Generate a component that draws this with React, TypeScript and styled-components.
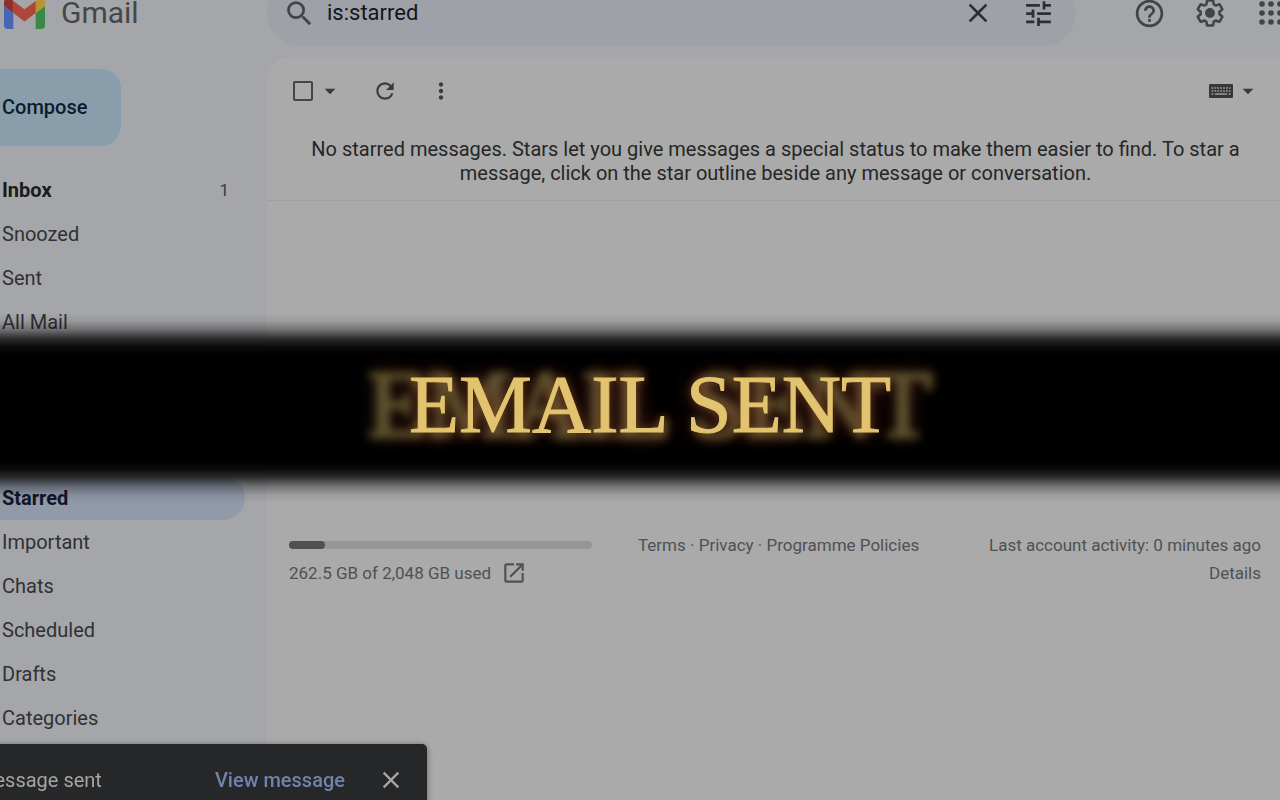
import React from "react";
import styled, { createGlobalStyle } from "styled-components";
import {
  MdArrowDropDown,
  MdClose,
  MdHelpOutline,
  MdMoreVert,
  MdOpenInNew,
  MdRefresh,
  MdSearch,
  MdTune,
} from "react-icons/md";

const GlobalStyle = createGlobalStyle`
  *, *::before, *::after { box-sizing: border-box; }
  body {
    margin: 0;
    background: #a5a6a9;
    color: #2b2c2e;
    font-family: Roboto, "Liberation Sans", sans-serif;
    overflow: hidden;
  }
`;

const Page = styled.div`
  display: flex;
  flex-direction: column;
  min-height: 100vh;
  overflow: hidden;
`;

const Header = styled.header`
  display: flex;
  align-items: center;
  height: 66px;
  margin-top: -20px;
  color: #414345;
`;

const Brand = styled.a`
  display: flex;
  align-items: center;
  gap: 16px;
  flex: 0 0 267px;
  padding-left: 4px;
  color: #454648;
  font: 400 30px/32px Roboto, sans-serif;
  text-decoration: none;
`;

const SearchBar = styled.form`
  display: flex;
  align-items: center;
  flex: 1;
  min-width: 0;
  height: 66px;
  padding: 0 22px 0 16px;
  border-radius: 33px;
  background: #9ea2a8;
`;

const SearchInput = styled.input`
  flex: 1;
  min-width: 0;
  margin-left: 12px;
  padding: 0;
  border: 0;
  outline: 0;
  background: transparent;
  color: #151618;
  font: 400 22px/28px Roboto, sans-serif;
`;

const IconButton = styled.button<{ $size?: number }>`
  display: flex;
  align-items: center;
  justify-content: center;
  flex: none;
  width: ${(p) => p.$size ?? 32}px;
  height: ${(p) => p.$size ?? 32}px;
  padding: 0;
  border: 0;
  background: transparent;
  color: inherit;

  & > svg { flex: none; }
`;

const SearchActions = styled.div`
  display: flex;
  gap: 28px;
  color: #2d2f33;
`;

const HeaderActions = styled.div`
  display: flex;
  gap: 29px;
  flex: 0 0 204px;
  padding-left: 57px;
  overflow: hidden;
`;

const Body = styled.div`
  display: flex;
  flex: 1;
`;

const Sidebar = styled.aside`
  flex: 0 0 267px;
  padding: 23px 22px 0 0;
`;

const Compose = styled.button`
  display: block;
  width: 121px;
  height: 77px;
  margin-bottom: 22px;
  padding: 0 0 2px 2px;
  border: 0;
  border-radius: 0 20px 20px 0;
  background: #8a9dab;
  color: #0b1c2d;
  font: 500 20px/24px Roboto, sans-serif;
  text-align: left;
`;

const Nav = styled.nav`
  display: flex;
  flex-direction: column;
  gap: 132px;
`;

const FolderList = styled.ul`
  margin: 0;
  padding: 0;
  list-style: none;
`;

const FolderLink = styled.a<{ $bold?: boolean; $active?: boolean }>`
  display: flex;
  align-items: center;
  justify-content: space-between;
  height: 44px;
  padding: 0 16px 0 2px;
  border-radius: 0 22px 22px 0;
  background: ${(p) => (p.$active ? "#9299a9" : "transparent")};
  color: ${(p) => (p.$active ? "#101827" : p.$bold ? "#1b1c1e" : "#303133")};
  font-size: 20px;
  line-height: 24px;
  font-weight: ${(p) => (p.$bold || p.$active ? 700 : 400)};
  text-decoration: none;
`;

const Count = styled.span`
  font-size: 17px;
  font-weight: 400;
  color: #3a3b3d;
`;

const Panel = styled.main`
  flex: 1;
  min-width: 0;
  margin-top: 11px;
  border-radius: 24px 0 0 0;
  background: #aaaaaa;
`;

const Toolbar = styled.div`
  display: flex;
  align-items: center;
  height: 68px;
  padding: 0 19px 0 26px;
  color: #3a3b3c;
`;

const Checkbox = styled.input`
  appearance: none;
  width: 20px;
  height: 20px;
  margin: 0 5px 0 0;
  border: 2px solid #444546;
  border-radius: 2px;
`;

const ToolGroup = styled.div`
  display: flex;
  align-items: center;
  gap: 30px;
  flex: 1;
  margin-left: 30px;
`;

const KeyboardButton = styled(IconButton)`
  width: auto;
  gap: 2px;
`;

const EmptyMessage = styled.p`
  margin: 0;
  padding: 12px 36px 15px 40px;
  border-bottom: 1px solid #9fa0a1;
  color: #252627;
  font-size: 20px;
  line-height: 24px;
  text-align: center;
`;

const Footer = styled.footer`
  display: grid;
  grid-template-columns: 303px 1fr auto;
  column-gap: 46px;
  padding: 330px 19px 0 22px;
  color: #505152;
  font-size: 17px;
  line-height: 28px;
`;

const Meter = styled.div`
  display: flex;
  align-items: center;
  height: 28px;
`;

const MeterTrack = styled.div`
  width: 100%;
  height: 8px;
  border-radius: 4px;
  background: #969697;
`;

const MeterFill = styled.div`
  height: 8px;
  border-radius: 4px;
  background: #4f5050;
`;

const StorageLink = styled.a`
  display: flex;
  align-items: center;
  gap: 10px;
  color: inherit;
  text-decoration: none;
  white-space: nowrap;
`;

const Activity = styled.div`
  text-align: right;
`;

const PlainLink = styled.a`
  color: inherit;
  text-decoration: none;
`;

const Toast = styled.div`
  position: fixed;
  left: -48px;
  bottom: -16px;
  display: flex;
  align-items: center;
  width: 475px;
  height: 72px;
  padding: 0 20px 0 25px;
  border-radius: 5px;
  background: #262729;
  box-shadow: 0 1px 6px rgba(0, 0, 0, 0.4);
  color: #a6a6a6;
  font-size: 20px;
  line-height: 24px;
`;

const ToastText = styled.span`
  flex: 1;
`;

const ToastLink = styled.a`
  margin-right: 30px;
  color: #7083ad;
  font-weight: 500;
  text-decoration: none;
`;

const Banner = styled.div`
  position: fixed;
  inset: 51% 0 auto;
  display: flex;
  align-items: center;
  justify-content: center;
  height: 190px;
  padding: 0 0 6px 20px;
  transform: translateY(-50%);
  pointer-events: none;
  background: linear-gradient(
    to bottom,
    transparent 0,
    rgba(0, 0, 0, 0.08) 8px,
    rgba(0, 0, 0, 0.34) 17px,
    rgba(0, 0, 0, 0.74) 26px,
    rgba(0, 0, 0, 0.94) 34px,
    #000 42px,
    #000 calc(100% - 42px),
    rgba(0, 0, 0, 0.94) calc(100% - 34px),
    rgba(0, 0, 0, 0.74) calc(100% - 26px),
    rgba(0, 0, 0, 0.34) calc(100% - 17px),
    rgba(0, 0, 0, 0.08) calc(100% - 8px),
    transparent 100%
  );
`;

const Title = styled.strong`
  position: relative;
  color: #e2c36f;
  font: 400 82px/96px "Liberation Serif", serif;
  white-space: nowrap;
  -webkit-text-stroke: 1px #e2c36f;
  text-shadow: 0 0 8px rgba(130, 85, 30, 0.6), 0 0 20px rgba(110, 50, 40, 0.8);

  &::before {
    content: attr(data-label);
    position: absolute;
    inset: 0 -80px;
    z-index: -1;
    color: #75683a;
    font-size: 96px;
    text-align: center;
    filter: blur(4px);
    opacity: 0.8;
    -webkit-text-stroke: 3px #75683a;
  }
`;

const inboxFolders = ["Inbox", "Snoozed", "Sent", "All Mail"];
const otherFolders = ["Starred", "Important", "Chats", "Scheduled", "Drafts", "Categories"];

const GmailLogo = () => (
  <svg width="41" height="31" viewBox="52 42 88 66" aria-hidden="true">
    <path fill="#4866b4" d="M58 108h14V74L52 59v43c0 3.32 2.69 6 6 6" />
    <path fill="#3b8848" d="M120 108h14c3.32 0 6-2.69 6-6V59l-20 15" />
    <path fill="#b99532" d="M120 48v26l20-15v-8c0-7.42-8.47-11.65-14.4-7.2" />
    <path fill="#b0453c" d="M72 74V48l24 18 24-18v26L96 92" />
    <path fill="#8d302c" d="M52 51v8l20 15V48l-5.6-4.2c-5.94-4.45-14.4-.22-14.4 7.2" />
  </svg>
);

const GearIcon = () => (
  <svg width="30" height="30" viewBox="1 1 22 22" aria-hidden="true">
    <path
      fill="none"
      stroke="currentColor"
      strokeWidth="2"
      strokeLinejoin="round"
      transform="translate(1 1) scale(.92)"
      d="M19.43 12.98c.04-.32.07-.64.07-.98 0-.34-.03-.66-.07-.98l2.11-1.65c.19-.15.24-.42.12-.64l-2-3.46c-.09-.16-.26-.25-.44-.25-.06 0-.12.01-.17.03l-2.49 1c-.52-.4-1.08-.73-1.69-.98l-.38-2.65C14.46 2.18 14.25 2 14 2h-4c-.25 0-.46.18-.49.42l-.38 2.65c-.61.25-1.17.59-1.69.98l-2.49-1c-.06-.02-.12-.03-.18-.03-.17 0-.34.09-.43.25l-2 3.46c-.13.22-.07.49.12.64l2.11 1.65c-.04.32-.07.65-.07.98 0 .33.03.66.07.98l-2.11 1.65c-.19.15-.24.42-.12.64l2 3.46c.09.16.26.25.44.25.06 0 .12-.01.17-.03l2.49-1c.52.4 1.08.73 1.69.98l.38 2.65c.03.24.24.42.49.42h4c.25 0 .46-.18.49-.42l.38-2.65c.61-.25 1.17-.59 1.69-.98l2.49 1c.06.02.12.03.18.03.17 0 .34-.09.43-.25l2-3.46c.12-.22.07-.49-.12-.64l-2.11-1.65z"
    />
    <circle cx="12" cy="12" r="3.6" fill="currentColor" />
  </svg>
);

const AppsIcon = () => (
  <svg width="24" height="24" viewBox="0 0 24 24" fill="currentColor" aria-hidden="true">
    {[3, 12, 21].map((y) =>
      [3, 12, 21].map((x) => <circle key={`${x}-${y}`} cx={x} cy={y} r="2.8" />)
    )}
  </svg>
);

const KeyboardIcon = () => (
  <svg width="24" height="14" viewBox="0 0 24 14" aria-hidden="true">
    <rect width="24" height="14" rx="1" fill="#363738" />
    <g stroke="#9a9a9a" strokeWidth="1.4">
      <path d="M2.5 4h19M2.5 7h19" strokeDasharray="1.8 1.1" />
      <path d="M2.5 10h2M6 10h12M19.5 10h2" />
    </g>
  </svg>
);

export default function App() {
  return (
    <>
      <GlobalStyle />
      <Page>
        <Header>
          <Brand href="#home">
            <GmailLogo />
            Gmail
          </Brand>
          <SearchBar role="search">
            <IconButton type="submit" aria-label="Search">
              <MdSearch size={33} />
            </IconButton>
            <SearchInput type="text" aria-label="Search mail" defaultValue="is:starred" />
            <SearchActions>
              <IconButton type="button" aria-label="Clear search">
                <MdClose size={32} />
              </IconButton>
              <IconButton type="button" aria-label="Search options">
                <MdTune size={33} />
              </IconButton>
            </SearchActions>
          </SearchBar>
          <HeaderActions>
            <IconButton aria-label="Support">
              <MdHelpOutline size={33} />
            </IconButton>
            <IconButton aria-label="Settings">
              <GearIcon />
            </IconButton>
            <IconButton aria-label="Google apps">
              <AppsIcon />
            </IconButton>
          </HeaderActions>
        </Header>

        <Body>
          <Sidebar>
            <Compose>Compose</Compose>
            <Nav aria-label="Folders">
              <FolderList>
                {inboxFolders.map((name) => (
                  <li key={name}>
                    <FolderLink href="#folder" $bold={name === "Inbox"}>
                      {name}
                      {name === "Inbox" && <Count>1</Count>}
                    </FolderLink>
                  </li>
                ))}
              </FolderList>
              <FolderList>
                {otherFolders.map((name) => (
                  <li key={name}>
                    <FolderLink href="#folder" $active={name === "Starred"}>
                      {name}
                    </FolderLink>
                  </li>
                ))}
              </FolderList>
            </Nav>
          </Sidebar>

          <Panel>
            <Toolbar>
              <Checkbox type="checkbox" aria-label="Select all" />
              <IconButton $size={24} aria-label="Select options">
                <MdArrowDropDown size={26} />
              </IconButton>
              <ToolGroup>
                <IconButton $size={26} aria-label="Refresh">
                  <MdRefresh size={26} />
                </IconButton>
                <IconButton $size={26} aria-label="More">
                  <MdMoreVert size={26} />
                </IconButton>
              </ToolGroup>
              <KeyboardButton aria-label="Input tools">
                <KeyboardIcon />
                <MdArrowDropDown size={26} />
              </KeyboardButton>
            </Toolbar>
            <EmptyMessage>
              No starred messages. Stars let you give messages a special status to make them easier
              to find. To star a message, click on the star outline beside any message or
              conversation.
            </EmptyMessage>
            <Footer>
              <div>
                <Meter>
                  <MeterTrack>
                    <MeterFill style={{ width: "12%" }} />
                  </MeterTrack>
                </Meter>
                <StorageLink href="#storage">
                  262.5 GB of 2,048 GB used
                  <MdOpenInNew size={26} />
                </StorageLink>
              </div>
              <div>
                <PlainLink href="#terms">Terms</PlainLink> ·{" "}
                <PlainLink href="#privacy">Privacy</PlainLink> ·{" "}
                <PlainLink href="#policies">Programme Policies</PlainLink>
              </div>
              <Activity>
                <div>Last account activity: 0 minutes ago</div>
                <PlainLink href="#details">Details</PlainLink>
              </Activity>
            </Footer>
          </Panel>
        </Body>
      </Page>

      <Toast role="status">
        <ToastText>Message sent</ToastText>
        <ToastLink href="#message">View message</ToastLink>
        <IconButton $size={32} aria-label="Dismiss">
          <MdClose size={28} />
        </IconButton>
      </Toast>

      <Banner>
        <Title data-label="EMAIL SENT">EMAIL SENT</Title>
      </Banner>
    </>
  );
}
